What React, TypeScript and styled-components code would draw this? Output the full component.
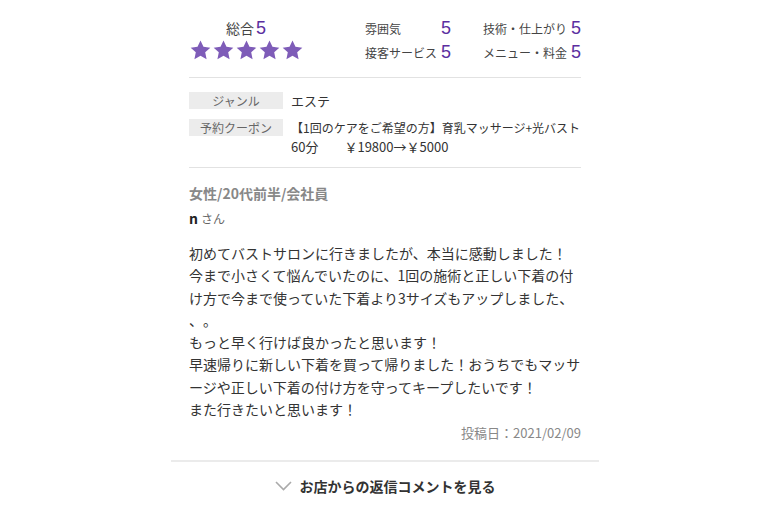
import React from "react";
import styled, { createGlobalStyle } from "styled-components";

const GlobalStyle = createGlobalStyle`
  body {
    margin: 0;
    background: #fff;
    font-family: "Noto Sans CJK JP", "Noto Sans", sans-serif;
    color: #333;
    text-spacing-trim: space-all;
  }
`;

const Wrapper = styled.div`
  width: 428px;
  margin: 0 auto;
`;

const Inner = styled.div`
  padding: 0 18px;
`;

const Summary = styled.div`
  display: flex;
  align-items: flex-start;
  padding: 16px 0 13px;
  border-bottom: 1px solid #e2e2e2;
`;

const Total = styled.div`
  width: 114px;
  display: flex;
  flex-direction: column;
  align-items: center;
`;

const TotalLine = styled.div`
  height: 24px;
  line-height: 24px;
  font-size: 14px;
  color: #444;
  display: flex;
  align-items: baseline;
  gap: 2px;
`;

const Score = styled.span`
  font-family: "Liberation Sans", "Noto Sans", sans-serif;
  font-size: 18px;
  line-height: 24px;
  color: #5b2ea0;
`;

const Stars = styled.div`
  display: flex;
  gap: 2px;
  height: 20px;
`;

const Grid = styled.div`
  margin-left: auto;
  display: grid;
  grid-template-columns: 86px 98px;
  column-gap: 32px;
`;

const GridItem = styled.div`
  height: 24px;
  display: flex;
  align-items: center;
  justify-content: space-between;
  font-size: 12px;
  color: #444;
  white-space: nowrap;
`;

const Info = styled.div`
  padding: 13px 0 11px;
  border-bottom: 1px solid #e2e2e2;
  display: flex;
  flex-direction: column;
  gap: 8px;
`;

const InfoRow = styled.div`
  display: flex;
  gap: 8px;
`;

const Label = styled.div`
  flex: 0 0 94px;
  height: 17px;
  margin-top: 1px;
  line-height: 17px;
  background: #ececec;
  color: #666;
  font-size: 12px;
  text-align: center;
`;

const Value = styled.div`
  font-size: 13px;
  line-height: 19px;
  color: #333;
  white-space: nowrap;
`;

const ValueLine = styled.div<{ $size?: number }>`
  font-size: ${(p) => p.$size ?? 13}px;
`;

const Review = styled.div`
  padding: 15px 0 18px;
`;

const Profile = styled.div`
  font-size: 14px;
  line-height: 20px;
  font-weight: bold;
  color: #888;
`;

const Name = styled.div`
  margin-top: 5px;
  line-height: 20px;
  font-size: 14px;
  font-weight: bold;
  color: #222;
  span {
    font-size: 12px;
    font-weight: normal;
    color: #666;
    margin-left: 3px;
  }
`;

const Body = styled.p`
  margin: 13px 0 0;
  font-size: 14px;
  line-height: 22.3px;
  color: #333;
  white-space: nowrap;
`;

const Posted = styled.div`
  margin-top: 4px;
  text-align: right;
  font-size: 13px;
  line-height: 18px;
  color: #888;
`;

const Footer = styled.div`
  border-top: 2px solid #ebebeb;
  padding-top: 12px;
  display: flex;
  justify-content: center;
`;

const ReplyButton = styled.button`
  border: none;
  background: none;
  padding: 0;
  display: flex;
  align-items: center;
  gap: 8px;
  height: 24px;
  font-family: inherit;
  font-size: 14px;
  font-weight: bold;
  color: #333;
  cursor: pointer;
`;

const Star = () => (
  <svg width="21" height="20" viewBox="0 0 24 23">
    <path
      d="M12 0.6l3.4 7.3 7.9 0.9-5.9 5.4 1.6 7.9L12 18.1l-7 4 1.6-7.9L0.7 8.8l7.9-0.9z"
      fill="#7e5cb8"
    />
  </svg>
);

const scores = [
  ["雰囲気", 5],
  ["技術・仕上がり", 5],
  ["接客サービス", 5],
  ["メニュー・料金", 5],
] as const;

const lines = [
  "初めてバストサロンに行きましたが、本当に感動しました！",
  "今まで小さくて悩んでいたのに、1回の施術と正しい下着の付",
  "け方で今まで使っていた下着より3サイズもアップしました、",
  "、。",
  "もっと早く行けば良かったと思います！",
  "早速帰りに新しい下着を買って帰りました！おうちでもマッサ",
  "ージや正しい下着の付け方を守ってキープしたいです！",
  "また行きたいと思います！",
];

export default function App() {
  return (
    <>
      <GlobalStyle />
      <Wrapper>
        <Inner>
          <Summary>
            <Total>
              <TotalLine>
                総合<Score>5</Score>
              </TotalLine>
              <Stars>
                {[0, 1, 2, 3, 4].map((i) => (
                  <Star key={i} />
                ))}
              </Stars>
            </Total>
            <Grid>
              {scores.map(([label, v]) => (
                <GridItem key={label}>
                  <span>{label}</span>
                  <Score>{v}</Score>
                </GridItem>
              ))}
            </Grid>
          </Summary>
          <Info>
            <InfoRow>
              <Label>ジャンル</Label>
              <Value>エステ</Value>
            </InfoRow>
            <InfoRow>
              <Label>予約クーポン</Label>
              <Value>
                <ValueLine $size={12}>【1回のケアをご希望の方】育乳マッサージ+光バスト</ValueLine>
                <ValueLine>60分　　￥19800→￥5000</ValueLine>
              </Value>
            </InfoRow>
          </Info>
          <Review>
            <Profile>女性/20代前半/会社員</Profile>
            <Name>
              n<span>さん</span>
            </Name>
            <Body>
              {lines.map((l, i) => (
                <React.Fragment key={i}>
                  {l}
                  {i < lines.length - 1 && <br />}
                </React.Fragment>
              ))}
            </Body>
            <Posted>投稿日：2021/02/09</Posted>
          </Review>
        </Inner>
        <Footer>
          <ReplyButton>
            <svg width="17" height="10" viewBox="0 0 17 10">
              <path d="M1 1l7.5 7.5L16 1" fill="none" stroke="#aaa" strokeWidth="1.6" />
            </svg>
            お店からの返信コメントを見る
          </ReplyButton>
        </Footer>
      </Wrapper>
    </>
  );
}
